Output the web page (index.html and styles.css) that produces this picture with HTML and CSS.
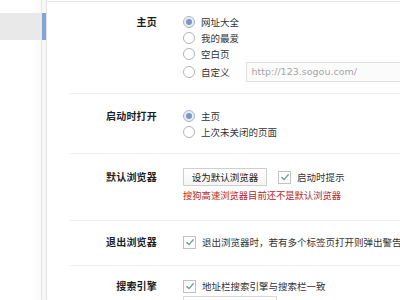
FILE: index.html
```html
<!DOCTYPE html>
<html lang="zh-CN">
<head>
<meta charset="UTF-8" />
<title>选项设置</title>
<link rel="stylesheet" href="styles.css">
</head>
<body>

<div class="sidebar">
  <div class="nav-list">
    <div class="nav-item active"></div>
  </div>
  <div class="scroll-track">
    <div class="scroll-thumb"></div>
  </div>
</div>

<div class="main">

  <div class="section s-home">
    <div class="label">主页</div>
    <div class="options">
      <div class="opt"><span class="radio checked"></span>网址大全</div>
      <div class="opt"><span class="radio"></span>我的最爱</div>
      <div class="opt"><span class="radio"></span>空白页</div>
      <div class="opt opt-custom"><span class="radio"></span>自定义<div class="url-input">http://123.sogou.com/</div></div>
    </div>
  </div>

  <div class="section s-start">
    <div class="label">启动时打开</div>
    <div class="options">
      <div class="opt"><span class="radio checked"></span>主页</div>
      <div class="opt"><span class="radio"></span>上次未关闭的页面</div>
    </div>
  </div>

  <div class="section s-default">
    <div class="label label-btn">默认浏览器</div>
    <div class="options">
      <div class="btn-row">
        <div class="btn">设为默认浏览器</div>
        <div class="opt"><span class="check"><svg width="10" height="10" viewBox="0 0 10 10"><path d="M1.5 5.2 L4 7.6 L8.6 2.4" fill="none" stroke="#6f9a93" stroke-width="1.4"/></svg></span>启动时提示</div>
      </div>
      <div class="warn">搜狗高速浏览器目前还不是默认浏览器</div>
    </div>
  </div>

  <div class="section s-exit">
    <div class="label">退出浏览器</div>
    <div class="options">
      <div class="opt nowrap"><span class="check"><svg width="10" height="10" viewBox="0 0 10 10"><path d="M1.5 5.2 L4 7.6 L8.6 2.4" fill="none" stroke="#6f9a93" stroke-width="1.4"/></svg></span>退出浏览器时，若有多个标签页打开则弹出警告提示</div>
    </div>
  </div>

  <div class="section s-search">
    <div class="label">搜索引擎</div>
    <div class="options">
      <div class="opt"><span class="check"><svg width="10" height="10" viewBox="0 0 10 10"><path d="M1.5 5.2 L4 7.6 L8.6 2.4" fill="none" stroke="#6f9a93" stroke-width="1.4"/></svg></span>地址栏搜索引擎与搜索栏一致</div>
      <div class="select"></div>
    </div>
  </div>

</div>

</body>
</html>
```

FILE: styles.css
```css
html, body {
  margin: 0;
  padding: 0;
  height: 100%;
  overflow: hidden;
}
body {
  display: flex;
  background: #fff;
  font-family: "Noto Sans CJK SC", "Liberation Sans", sans-serif;
  color: #333;
  font-size: 9.5px;
}

/* 左侧导航 */
.sidebar {
  display: flex;
  width: 46px;
  flex: none;
  border-right: 1px solid #e3e3e3;
  background: linear-gradient(90deg, #fff 70%, #f6f6f6);
}
.nav-list {
  width: 41px;
}
.nav-item {
  height: 27px;
}
.nav-item.active {
  margin-top: 13px;
  background: #e9e9e9;
}
.scroll-track {
  width: 4px;
  border-left: 1px solid #e6e6e6;
}
.scroll-thumb {
  margin-top: 13px;
  height: 27px;
  background: #82a3d3;
}

/* 右侧设置 */
.main {
  flex: 1;
  min-width: 0;
  margin-top: 1px;
  border-top: 1px solid #e4e4e4;
  overflow: hidden;
}
.section {
  display: grid;
  grid-template-columns: 87px 1fr;
  column-gap: 26px;
  margin-left: 23px;
  border-bottom: 1px solid #efefef;
  align-items: start;
}
.label {
  text-align: right;
  font-weight: bold;
  font-size: 10px;
  color: #1e1e1e;
  line-height: 16px;
  letter-spacing: 0.2px;
}
.label-btn {
  line-height: 18px;
}
.options {
  min-width: 0;
}
.opt {
  display: flex;
  align-items: center;
  height: 16px;
  line-height: 16px;
  white-space: nowrap;
}
.nowrap {
  overflow: hidden;
}
.radio {
  width: 10px;
  height: 10px;
  border: 1px solid #b4b4b4;
  border-radius: 50%;
  margin-right: 6px;
  flex: none;
  background: #fff;
  box-sizing: content-box;
  display: flex;
  align-items: center;
  justify-content: center;
}
.radio.checked {
  background: #e8eef6;
  border-color: #a9b4c2;
}
.radio.checked::after {
  content: "";
  width: 6px;
  height: 6px;
  border-radius: 50%;
  background: #7b98bd;
}
.check {
  width: 11px;
  height: 11px;
  border: 1px solid #c2c2c2;
  margin-right: 6px;
  flex: none;
  display: flex;
  align-items: center;
  justify-content: center;
  background: #fdfdfd;
}
.opt-custom {
  height: 20px;
}
.url-input {
  margin-left: 16px;
  width: 170px;
  flex: none;
  height: 18px;
  line-height: 18px;
  border: 1px solid #e0e0e0;
  background: #fbfbfb;
  color: #a6a6a6;
  font-family: "DejaVu Sans", sans-serif;
  font-size: 9.5px;
  padding-left: 5px;
}

.s-home { padding: 12px 0 11px; }
.s-start { padding: 14px 0 13px; }
.s-default { padding: 14px 0 17px; }
.s-exit { padding: 13px 0 15px; }
.s-search { padding: 12px 0 10px; }

.btn-row {
  display: flex;
  align-items: center;
  gap: 11px;
}
.btn {
  width: 82px;
  height: 16px;
  line-height: 16px;
  border: 1px solid #cfcfcf;
  background: linear-gradient(#fff, #f5f5f5);
  text-align: center;
  color: #222;
}
.warn {
  margin-top: 1px;
  line-height: 16px;
  color: #b3282d;
  font-size: 9.3px;
  white-space: nowrap;
}
.select {
  margin-top: 2px;
  width: 92px;
  height: 20px;
  border: 1px solid #d8d8d8;
  background: #fff;
}
```
